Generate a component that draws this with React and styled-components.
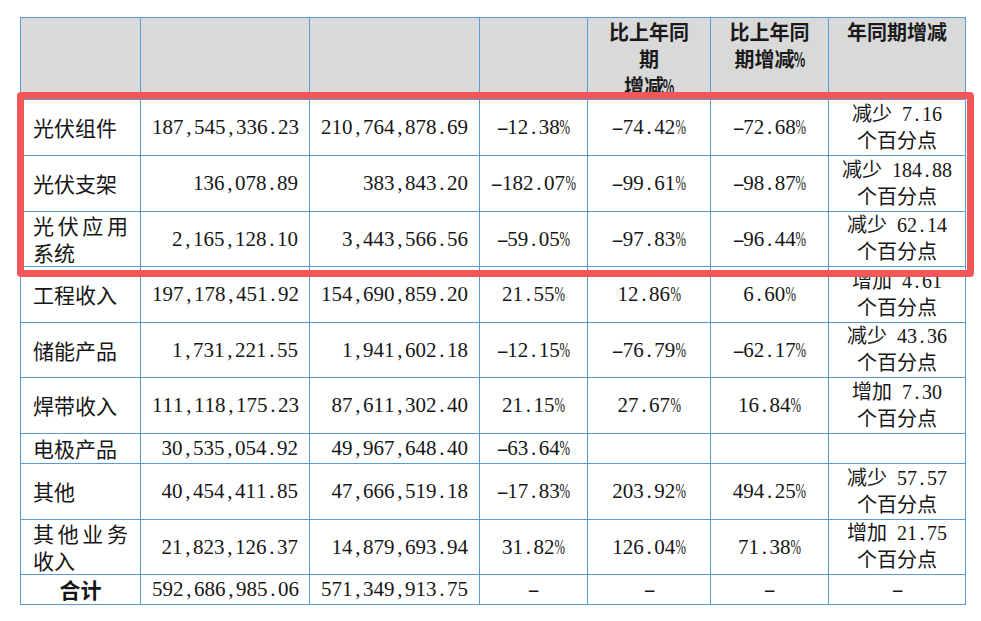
import React from 'react';
import styled, { createGlobalStyle } from 'styled-components';

const Global = createGlobalStyle`
  html, body { margin: 0; padding: 0; background: #ffffff; }
  body {
    font-family: "Liberation Serif", "Noto Sans CJK SC", serif;
    color: #161616;
  }
`;

const Page = styled.div`
  width: 981px;
  height: 621px;
  padding: 17px 0 0 20px;
  box-sizing: border-box;
`;

const Frame = styled.div`
  position: relative;
  width: 945px;
`;

const Table = styled.table`
  border-collapse: collapse;
  table-layout: fixed;
  width: 945px;
  font-size: 21px;
  line-height: 27px;
`;

const HeadRow = styled.tr`
  height: 82px;
`;

const Row = styled.tr`
  height: ${p => p.$h}px;
`;

const Th = styled.th`
  border: 1px solid #5b9bd5;
  background: #d9d9d9;
  padding: 0 2px;
  vertical-align: top;
  text-align: center;
  font-family: "Noto Sans CJK SC", sans-serif;
  font-weight: 700;
  font-size: 20px;
  line-height: 27px;
  color: #1a1a1a;
  overflow: hidden;
`;

const Td = styled.td`
  border: 1px solid #5b9bd5;
  padding: 0 ${p => (p.$align === 'right' ? '11px' : '2px')};
  vertical-align: middle;
  text-align: ${p => p.$align || 'center'};
  white-space: nowrap;
`;

const NameTd = styled.td`
  border: 1px solid #5b9bd5;
  padding: 0 12px;
  vertical-align: middle;
  text-align: ${p => (p.$total ? 'center' : 'justify')};
  font-family: "Noto Sans CJK SC", sans-serif;
  font-weight: ${p => (p.$total ? 700 : 400)};
`;

const Glyph = styled.span`
  display: inline-flex;
  justify-content: center;
  width: 0.5em;
`;

const Stretch = styled.span`
  display: inline-block;
  transform: scaleX(${p => p.$sx});
`;

const Line = styled.div`
  white-space: nowrap;
  font-size: 20px;
`;

const Highlight = styled.div`
  position: absolute;
  left: -3px;
  top: 75px;
  width: 957px;
  height: 185px;
  box-sizing: border-box;
  border: 7px solid #f35757;
  border-radius: 4px;
  pointer-events: none;
`;

function Half({ text }) {
  return (
    <>
      {Array.from(text).map((c, i) => {
        if (/[\u3000-\u9fff]/.test(c)) return <React.Fragment key={i}>{c}</React.Fragment>;
        if (c === '%') return <Glyph key={i}><Stretch $sx={0.6}>%</Stretch></Glyph>;
        if (c === '-') return <Glyph key={i}><Stretch $sx={1.75}>-</Stretch></Glyph>;
        if (c === ' ') return <Glyph key={i}>{'\u00a0'}</Glyph>;
        return <Glyph key={i}>{c}</Glyph>;
      })}
    </>
  );
}

const rows = [
  { h: 56, cells: ['光伏组件', '187,545,336.23', '210,764,878.69', '-12.38%', '-74.42%', '-72.68%', ['减少 7.16', '个百分点']] },
  { h: 56, cells: ['光伏支架', '136,078.89', '383,843.20', '-182.07%', '-99.61%', '-98.87%', ['减少 184.88', '个百分点']] },
  { h: 55, cells: ['光伏应用系统', '2,165,128.10', '3,443,566.56', '-59.05%', '-97.83%', '-96.44%', ['减少 62.14', '个百分点']] },
  { h: 56, cells: ['工程收入', '197,178,451.92', '154,690,859.20', '21.55%', '12.86%', '6.60%', ['增加 4.61', '个百分点']] },
  { h: 55, cells: ['储能产品', '1,731,221.55', '1,941,602.18', '-12.15%', '-76.79%', '-62.17%', ['减少 43.36', '个百分点']] },
  { h: 56, cells: ['焊带收入', '111,118,175.23', '87,611,302.40', '21.15%', '27.67%', '16.84%', ['增加 7.30', '个百分点']] },
  { h: 30, cells: ['电极产品', '30,535,054.92', '49,967,648.40', '-63.64%', '', '', null] },
  { h: 56, cells: ['其他', '40,454,411.85', '47,666,519.18', '-17.83%', '203.92%', '494.25%', ['减少 57.57', '个百分点']] },
  { h: 55, cells: ['其他业务收入', '21,823,126.37', '14,879,693.94', '31.82%', '126.04%', '71.38%', ['增加 21.75', '个百分点']] },
];

const widths = [120, 169, 170, 108, 123, 118, 137];

export default function App() {
  return (
    <Page>
      <Global />
      <Frame>
        <Table>
          <colgroup>
            {widths.map((w, i) => <col key={i} style={{ width: w }} />)}
          </colgroup>
          <thead>
            <HeadRow>
              <Th />
              <Th />
              <Th />
              <Th />
              <Th>比上年同<br />期<br />增减<Half text="%" /></Th>
              <Th>比上年同<br />期增减<Half text="%" /></Th>
              <Th>年同期增减</Th>
            </HeadRow>
          </thead>
          <tbody>
            {rows.map(({ h, cells: [name, a, b, c, d, e, f] }) => (
              <Row key={name} $h={h}>
                <NameTd>{name}</NameTd>
                <Td $align="right"><Half text={a} /></Td>
                <Td $align="right"><Half text={b} /></Td>
                <Td><Half text={c} /></Td>
                <Td>{d && <Half text={d} />}</Td>
                <Td>{e && <Half text={e} />}</Td>
                <Td>
                  {f && f.map((l, i) => <Line key={i}><Half text={l} /></Line>)}
                </Td>
              </Row>
            ))}
            <Row $h={30}>
              <NameTd $total>合计</NameTd>
              <Td $align="right"><Half text="592,686,985.06" /></Td>
              <Td $align="right"><Half text="571,349,913.75" /></Td>
              <Td><Half text="-" /></Td>
              <Td><Half text="-" /></Td>
              <Td><Half text="-" /></Td>
              <Td><Half text="-" /></Td>
            </Row>
          </tbody>
        </Table>
        <Highlight />
      </Frame>
    </Page>
  );
}
